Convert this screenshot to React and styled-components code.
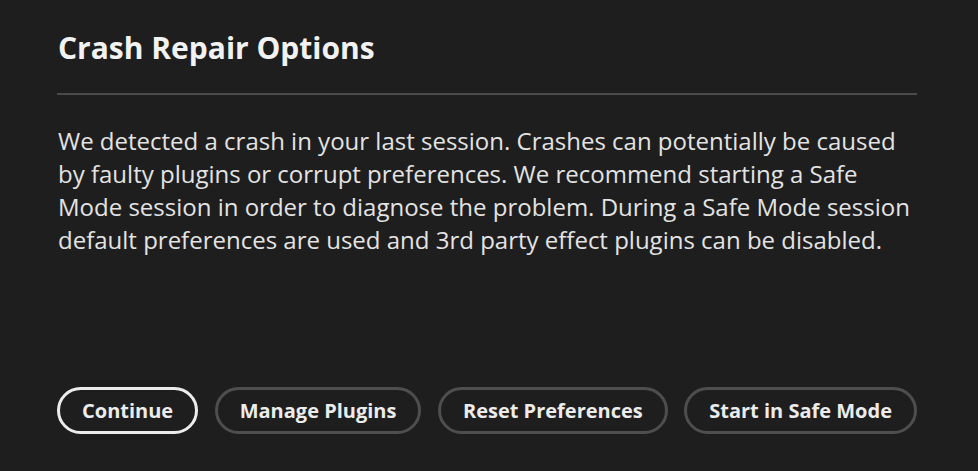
import React from "react";
import styled, { createGlobalStyle } from "styled-components";

const GlobalStyle = createGlobalStyle`
    html, body {
        margin: 0;
        padding: 0;
        background-color: #1e1e1e;
    }
    body {
        font-family: "Open Sans", "Noto Sans", sans-serif;
        -webkit-font-smoothing: antialiased;
    }
`

const Dialog = styled.div`
    width: 978px;
    height: 471px;
    box-sizing: border-box;
    padding: 26px 61px 37px 57px;
    display: flex;
    flex-direction: column;
    background-color: #1e1e1e;
    color: #e6e6e6;
`

const Title = styled.h1`
    margin: 0 0 0 1px;
    font-size: 30px;
    font-weight: 700;
    line-height: 44px;
    color: #f2f2f2;
`

const Divider = styled.hr`
    margin: 23px 0 0;
    border: 0;
    height: 2px;
    background-color: #4b4b4b;
`

const Message = styled.div`
    margin: 29px 0 0 1px;
    font-size: 24px;
    line-height: 33px;
    color: #e3e3e3;
`

const Line = styled.span`
    display: block;
    white-space: nowrap;
`

const Actions = styled.div`
    margin-top: auto;
    display: flex;
    justify-content: space-between;
`

const Button = styled.button`
    height: 47px;
    box-sizing: border-box;
    padding: 0 22px;
    border-radius: 24px;
    border: ${({ $primary }) => ($primary ? "3px solid #ececec" : "3px solid #4e4e4e")};
    background-color: transparent;
    color: #ececec;
    font-family: inherit;
    font-size: 20px;
    font-weight: 700;
    cursor: pointer;
`

const lines = [
    "We detected a crash in your last session. Crashes can potentially be caused",
    "by faulty plugins or corrupt preferences. We recommend starting a Safe",
    "Mode session in order to diagnose the problem. During a Safe Mode session",
    "default preferences are used and 3rd party effect plugins can be disabled.",
]

const App = () => {
    return (
        <>
            <GlobalStyle />
            <Dialog>
                <Title>Crash Repair Options</Title>
                <Divider />
                <Message>
                    {lines.map((line) => (
                        <Line key={line}>{line}</Line>
                    ))}
                </Message>
                <Actions>
                    <Button $primary>Continue</Button>
                    <Button>Manage Plugins</Button>
                    <Button>Reset Preferences</Button>
                    <Button>Start in Safe Mode</Button>
                </Actions>
            </Dialog>
        </>
    )
};

export default App;
